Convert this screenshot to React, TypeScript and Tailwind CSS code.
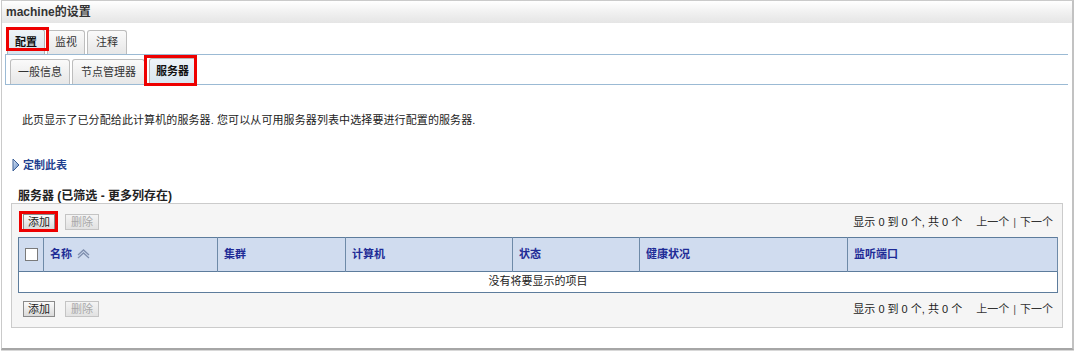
import React from "react";

const HEADERS = [
  { label: "名称", w: "w-[174px]", sort: true },
  { label: "集群", w: "w-[128px]" },
  { label: "计算机", w: "w-[167px]" },
  { label: "状态", w: "w-[127px]" },
  { label: "健康状况", w: "w-[208px]" },
  { label: "监听端口", w: "w-[210px]" },
];

function SortIcon() {
  return (
    <svg width="13" height="10" viewBox="0 0 13 10" className="ml-[5px]">
      <polyline points="1,9 6.5,4 12,9" fill="none" stroke="#7f8fae" strokeWidth="1.3" />
      <polyline points="1,6 6.5,1 12,6" fill="none" stroke="#7f8fae" strokeWidth="1.3" />
    </svg>
  );
}

function Triangle() {
  return (
    <svg width="8" height="14" viewBox="0 0 8 14">
      <defs>
        <linearGradient id="tg" x1="0" y1="0" x2="1" y2="1">
          <stop offset="0" stopColor="#dfeaf8" />
          <stop offset="1" stopColor="#5a82bd" />
        </linearGradient>
      </defs>
      <polygon points="1,1 7,7 1,13" fill="url(#tg)" stroke="#3a5e96" strokeWidth="1" />
    </svg>
  );
}

function Btn({ label, disabled }: { label: string; disabled?: boolean }) {
  return (
    <div
      className={
        disabled
          ? "h-[16px] px-[5px] flex items-center border border-[#c4c4c4] bg-gradient-to-b from-[#f4f4f4] to-[#e2e2e2] text-[11px] text-[#a8a8a8]"
          : "h-[16px] px-[4px] flex items-center border border-[#8a8a8a] bg-gradient-to-b from-[#fbfbfb] to-[#dadada] text-[11px] text-[#222]"
      }
    >
      {label}
    </div>
  );
}

function ButtonRow() {
  return (
    <div className="flex items-center justify-between pl-[5px] pr-[3px]">
      <div className="flex items-center gap-[10px]">
        <Btn label="添加" />
        <Btn label="删除" disabled />
      </div>
      <div className="text-[11px] text-[#222] whitespace-pre flex items-center">
        <span>显示 0 到 0 个, 共 0 个</span>
        <span className="ml-[14px] text-[#333]">上一个</span>
        <span className="mx-[4px] text-[#555]">|</span>
        <span className="text-[#333]">下一个</span>
      </div>
    </div>
  );
}

function RedBox({ cls }: { cls: string }) {
  return <div className={"absolute border-[3px] border-[#ee0000] pointer-events-none " + cls} />;
}

export default function App() {
  return (
    <div className="w-[1074px] h-[351px] bg-white relative font-['Liberation_Sans','Noto_Sans_CJK_SC',sans-serif] text-[#222]">
      <div className="ml-[1px] w-[1073px] h-[350px] border-l border-t border-[#cacaca] border-r-2 border-r-[#c2c2c2] border-b-2 border-b-[#a6a6a6] shadow-[0_1px_0_#d8d8d8] flex flex-col">
        {/* title bar */}
        <div className="h-[22px] shrink-0 flex items-center pl-[4px] bg-gradient-to-b from-[#ffffff] via-[#f1f1f1] to-[#e5e5e5] text-[12px] font-bold text-[#333]">
          machine的设置
        </div>

        {/* top tabs */}
        <div className="px-[3px]">
          <div className="h-[31px] flex items-end gap-[2px] pl-[2px]">
            <div className="h-[25px] px-[7px] flex items-center border border-b-0 border-[#b4b4b4] rounded-t-[3px] bg-gradient-to-b from-[#eef3f7] to-[#d9e4ed] text-[11px] font-bold text-[#111]">
              配置
            </div>
            <div className="h-[24px] px-[7px] flex items-center border border-b-0 border-[#bdbdbd] rounded-t-[3px] bg-gradient-to-b from-[#fafafa] to-[#e7e7e7] text-[11px] text-[#333]">
              监视
            </div>
            <div className="h-[24px] px-[8px] flex items-center border border-b-0 border-[#bdbdbd] rounded-t-[3px] bg-gradient-to-b from-[#fafafa] to-[#e7e7e7] text-[11px] text-[#333]">
              注释
            </div>
          </div>

          {/* sub tabs box */}
          <div className="h-[31px] border-t border-l border-b border-[#9bbad4] mr-[1px] flex items-end gap-[2px] pl-[4px]">
            <div className="h-[25px] px-[7px] flex items-center border border-b-0 border-[#bdbdbd] rounded-t-[3px] bg-gradient-to-b from-[#fafafa] to-[#e7e7e7] text-[11px] text-[#333]">
              一般信息
            </div>
            <div className="h-[25px] px-[8px] flex items-center border border-b-0 border-[#bdbdbd] rounded-t-[3px] bg-gradient-to-b from-[#fafafa] to-[#e7e7e7] text-[11px] text-[#333]">
              节点管理器
            </div>
            <div className="h-[26px] px-[6px] ml-[2px] flex items-center border border-b-0 border-[#b4b4b4] rounded-t-[3px] bg-gradient-to-b from-[#eef3f8] to-[#d8e5f0] text-[11px] font-bold text-[#111]">
              服务器
            </div>
          </div>
        </div>

        {/* description */}
        <div className="mt-[27px] ml-[20px] text-[11px] leading-[16px] tracking-[0.1px] text-[#222] whitespace-pre">
          此页显示了已分配给此计算机的服务器. 您可以从可用服务器列表中选择要进行配置的服务器.
        </div>

        {/* customize */}
        <div className="mt-[29px] ml-[10px] h-[16px] flex items-center gap-[3px]">
          <Triangle />
          <span className="text-[11px] font-bold text-[#1f3f8f]">定制此表</span>
        </div>

        {/* heading */}
        <div className="mt-[16px] ml-[16px] text-[12px] leading-[14px] font-bold text-[#222] whitespace-pre">
          服务器 (已筛选 - 更多列存在)
        </div>

        {/* table box */}
        <div className="mx-[9px] w-[1052px] border border-[#cbcbcb] bg-[#f5f5f5] px-[6px] pt-[10px] pb-[10px]">
          <ButtonRow />
          <table className="mt-[6px] w-[1039px] border-collapse border border-[#5d7c9c] table-fixed">
            <thead>
              <tr className="h-[34px] bg-[#d0dcef]">
                <th className="w-[25px] border-r border-[#6e8aa8] p-0">
                  <div className="flex justify-center">
                    <div className="w-[13px] h-[13px] bg-white border border-[#7a7a7a]" />
                  </div>
                </th>
                {HEADERS.map((h) => (
                  <th
                    key={h.label}
                    className={h.w + " border-r border-[#6e8aa8] p-0 text-left"}
                  >
                    <div className="flex items-center pl-[6px] text-[11px] font-bold text-[#1e2b96]">
                      {h.label}
                      {h.sort ? <SortIcon /> : null}
                    </div>
                  </th>
                ))}
              </tr>
            </thead>
            <tbody>
              <tr className="h-[21px] bg-white border-t border-[#5d7c9c]">
                <td colSpan={7} className="text-center text-[11px] text-[#222] p-0">
                  没有将要显示的项目
                </td>
              </tr>
            </tbody>
          </table>
          <div className="mt-[8px]">
            <ButtonRow />
          </div>
        </div>
      </div>

      {/* annotation boxes */}
      <RedBox cls="left-[6px] top-[27px] w-[43px] h-[24px]" />
      <RedBox cls="left-[144px] top-[55px] w-[53px] h-[31px]" />
      <RedBox cls="left-[19px] top-[211px] w-[39px] h-[21px]" />
    </div>
  );
}
